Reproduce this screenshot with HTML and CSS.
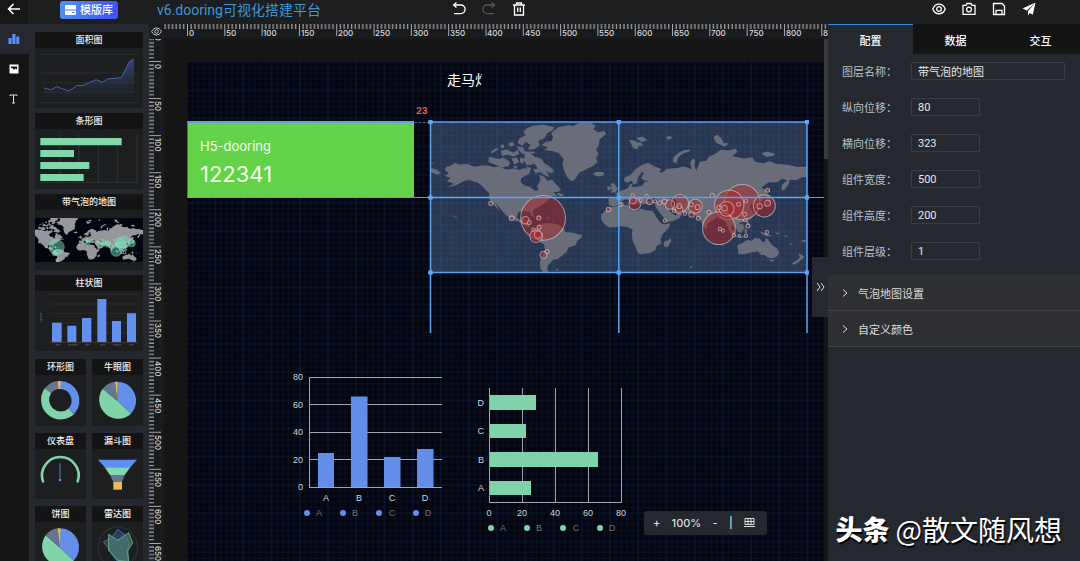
FILE: index.html
```html
<!DOCTYPE html>
<html lang="zh-CN">
<head>
<meta charset="utf-8">
<title>v6.dooring可视化搭建平台</title>
<link rel="stylesheet" href="styles.css">
</head>
<body>
<svg class="defs" aria-hidden="true">
  <symbol id="world" viewBox="61 96 1130 452" preserveAspectRatio="none">
    <g class="land">
      <path d="M105 240L110 230 122 228 135 219 150 223 172 222 195 230 215 226 235 226 250 231 268 230 290 238 312 235 330 240 342 234 362 240 358 252 345 258 334 265 333 276 345 287 360 290 376 302 386 300 382 287 392 270 388 254 404 260 413 272 426 268 440 284 454 298 446 305 430 306 444 316 425 320 412 332 400 342 388 350 372 358 370 368 375 382 366 378 360 366 342 362 326 366 321 380 330 390 342 382 347 384 346 396 358 400 360 412 375 418 362 414 345 404 325 394 306 388 290 376 277 362 262 344 255 337 272 364 262 354 243 336 238 322 238 308 228 300 218 288 205 278 190 274 178 269 160 274 142 284 112 293 132 281 112 273 122 264 105 257 118 250Z"/>
      <path d="M62 234L82 239 94 249 84 254 62 246ZM65 216L72 219 67 221ZM126 376L134 377 132 380ZM136 378L143 381 137 383Z"/>
      <path d="M372 418L388 403 402 399 422 398 445 403 462 414 466 425 484 427 517 434 515 442 502 452 498 465 476 472 470 486 456 496 444 506 430 508 422 518 414 526 412 538 417 547 402 548 392 535 390 518 396 498 406 478 402 462 390 455 374 442 365 432Z"/>
      <path d="M395 165L408 155 425 153 430 142 424 130 445 112 475 106 490 108 508 99 542 97 558 108 550 118 565 127 582 124 588 130 570 146 567 165 559 178 566 192 558 205 564 215 550 228 528 238 508 248 495 268 486 273 472 262 462 240 458 222 462 208 448 190 428 183 402 180 415 172Z"/>
      <path d="M323 158L330 144 348 136 340 126 352 114 370 107 402 104 433 111 430 120 412 130 405 144 385 152 390 166 372 178 354 178 362 165 348 155 338 168Z"/>
      <path d="M345 192L358 188 375 200 394 205 405 220 424 232 433 244 422 250 410 243 420 262 402 253 390 246 377 250 370 238 385 236 374 222 352 226 343 212ZM238 199L258 205 270 207 280 202 300 214 298 228 275 233 262 226 236 216ZM244 184L262 172 264 180 246 190ZM272 182L292 178 310 188 324 178 328 192 312 200 294 194 278 198ZM295 160L308 155 315 165 302 170ZM320 168L340 172 345 184 374 184 376 190 340 192 328 182ZM305 205L322 202 328 216 314 224ZM332 202L344 206 340 222 330 216ZM272 165L282 163 284 172 274 174ZM308 229L324 227 320 236ZM352 230L364 234 360 244 348 242ZM550 251L558 245 580 246 584 253 570 259 556 257ZM442 308L462 312 458 318 446 316Z"/>
      <path d="M378 380L392 379 402 384 388 384ZM406 381L424 382 410 386ZM434 540L446 535 444 541Z"/>
    </g>
    <g transform="translate(570 0)">
      <g class="land">
        <path d="M27 344L26 326 34 322 52 325 51 314 44 311 60 303 72 299 86 293 90 282 98 280 95 291 113 290 128 286 134 276 146 272 132 271 124 264 132 248 126 246 114 262 112 278 102 284 95 272 82 278 73 273 74 262 92 255 106 238 128 223 145 219 165 229 185 237 178 246 186 248 202 236 232 234 252 229 266 234 276 239 270 218 278 206 286 210 284 228 289 242 300 214 320 212 326 200 345 192 362 179 388 181 406 175 413 185 398 198 430 205 458 202 464 214 490 220 508 213 530 222 564 224 590 230 621 230 621 260 604 262 590 270 570 268 566 282 552 302 544 298 546 284 562 270 546 266 530 277 506 276 484 292 502 302 498 318 484 334 470 335 478 352 466 354 462 342 450 342 453 356 462 370 452 386 436 394 418 398 424 410 416 422 404 412 398 404 393 416 404 436 392 428 383 412 377 395 368 390 352 380 336 392 324 400 319 417 309 410 302 390 288 376 266 370 247 366 235 358 246 374 238 384 218 393 200 396 190 380 175 362 166 348 168 338 148 340 130 342 122 338 120 346 110 334 102 326 108 338 104 346 92 332 78 327 64 334 58 344 40 349Z"/>
        <path d="M26 352L48 348 78 344 90 348 92 358 112 362 124 356 142 361 160 362 168 378 182 398 194 402 212 398 206 414 188 432 182 446 185 460 170 468 166 480 148 489 124 492 114 488 106 468 98 450 96 432 98 418 84 411 60 407 46 412 26 411 12 400 4 388 4 374 14 364Z"/>
        <path d="M193 454L204 450 212 444 214 452 206 468 196 472 191 464ZM412 464L428 458 442 449 456 452 464 443 480 445 484 452 494 456 498 442 508 453 516 464 530 474 538 486 532 498 520 503 504 502 494 494 484 494 474 484 452 487 434 492 416 492ZM508 507L523 508 516 515ZM594 488L602 492 614 499 604 508 596 516 580 523 576 519 594 508 600 500Z"/>
        <path d="M26 294L36 290 32 282 40 278 49 288 54 296 48 306 32 308 38 298ZM22 288L31 289 31 298 24 302ZM0 126L15 124 18 132 8 142 0 148ZM0 246L12 248 10 256 0 259ZM88 150L106 152 114 158 122 156 130 166 116 168 112 178 100 174ZM108 144L128 140 142 150 126 156ZM198 140L212 138 217 144 204 150ZM218 214L222 200 236 188 254 180 272 179 268 184 246 192 234 204 230 220ZM340 142L352 134 364 144 370 158 386 160 374 170 362 164 348 158ZM484 190L500 184 526 191 520 198 498 200Z"/>
        <path d="M494 308L504 312 513 326 512 344 498 350 490 345 502 336ZM502 296L512 300 504 306ZM386 410L400 420 408 436 398 432ZM410 408L428 400 434 412 424 428 412 424ZM404 436L430 438 444 442 420 442ZM434 414L442 418 440 432 434 426ZM438 386L446 394 450 412 440 400ZM478 424L496 428 518 438 498 438ZM524 426L540 428 534 433ZM550 434L566 438 558 440ZM568 458L580 464 572 464ZM600 452L618 448 616 456ZM270 528L279 530 272 534ZM618 216L621 214 621 225Z"/>
      </g>
      <path class="sea" d="M138 331L150 320 164 324 180 332 168 336 150 334ZM208 326L218 318 228 330 230 346 222 348ZM158 362L166 364 184 388 194 400 188 402 174 384ZM206 357L216 358 232 372 228 376 214 368Z"/>
      <g class="bubbles">
        <circle cx="427" cy="336" r="53"/><circle cx="388" cy="344" r="44"/><circle cx="357" cy="414" r="49"/><circle cx="493" cy="347" r="33"/><circle cx="380" cy="356" r="22"/><circle cx="240" cy="339" r="26"/><circle cx="286" cy="348" r="21"/><circle cx="105" cy="341" r="18"/><circle cx="210" cy="343" r="14"/><circle cx="238" cy="359" r="11"/><circle cx="99" cy="331" r="10"/><circle cx="149" cy="334" r="9"/><circle cx="503" cy="339" r="9"/><circle cx="479" cy="348" r="8"/><circle cx="275" cy="373" r="8"/><circle cx="293" cy="351" r="7"/><circle cx="26" cy="358" r="7"/>
        <circle cx="65" cy="342" r="5"/><circle cx="122" cy="330" r="5"/><circle cx="98" cy="316" r="5"/><circle cx="140" cy="318" r="5"/><circle cx="166" cy="334" r="5"/><circle cx="179" cy="338" r="6"/><circle cx="194" cy="334" r="7"/><circle cx="222" cy="362" r="5"/><circle cx="238" cy="348" r="7"/><circle cx="255" cy="370" r="5"/><circle cx="274" cy="343" r="6"/><circle cx="295" cy="384" r="6"/><circle cx="195" cy="391" r="5"/><circle cx="327" cy="366" r="6"/><circle cx="337" cy="316" r="6"/><circle cx="357" cy="352" r="6"/><circle cx="374" cy="354" r="8"/><circle cx="416" cy="342" r="6"/><circle cx="438" cy="333" r="5"/><circle cx="434" cy="372" r="6"/><circle cx="436" cy="389" r="5"/><circle cx="444" cy="407" r="6"/><circle cx="360" cy="416" r="5"/><circle cx="369" cy="421" r="5"/><circle cx="402" cy="435" r="5"/><circle cx="418" cy="437" r="4"/><circle cx="438" cy="436" r="5"/><circle cx="501" cy="426" r="5"/><circle cx="503" cy="300" r="6"/>
      </g>
    </g>
    <g class="bubbles">
      <circle cx="400" cy="383" r="67"/><circle cx="379" cy="438" r="19"/><circle cx="385" cy="433" r="11"/><circle cx="347" cy="390" r="11"/><circle cx="358" cy="397" r="6"/><circle cx="387" cy="383" r="6"/><circle cx="388" cy="411" r="6"/><circle cx="371" cy="418" r="5"/><circle cx="401" cy="494" r="10"/><circle cx="412" cy="484" r="6"/><circle cx="306" cy="384" r="7"/><circle cx="243" cy="340" r="6"/><circle cx="631" cy="344" r="5"/>
    </g>
  </symbol>
</svg>

<div class="app">
  <header class="topbar">
    <button class="back" aria-label="返回"><svg width="14" height="12" viewBox="0 0 14 12"><path d="M6.5 1L1.5 6l5 5M1.5 6H13" class="line-icon thick"/></svg></button>
    <div class="top-left">
      <button class="template"><svg width="11" height="10" viewBox="0 0 11 10"><path d="M1 0h9a1 1 0 0 1 1 1v3.6H0V1a1 1 0 0 1 1-1zM0 5.6h11V9a1 1 0 0 1-1 1H1a1 1 0 0 1-1-1z" fill="#fff"/><path d="M7 7.5h2.5" stroke="#538bf5"/></svg>模版库</button>
      <h1 class="title">v6.dooring可视化搭建平台</h1>
    </div>
    <div class="history">
      <button aria-label="撤销"><svg width="14" height="14" viewBox="0 0 14 14"><path d="M4.500.5L1.500 3l3 2.500M2 3h6.800a4.300 4.300 0 0 1 0 8.600H2" class="line-icon"/></svg></button>
      <button aria-label="重做" disabled><svg width="14" height="14" viewBox="0 0 14 14"><path d="M9.500.5l3 2.500-3 2.500M12 3H5.200a4.300 4.300 0 0 0 0 8.600H12" class="line-icon"/></svg></button>
      <button aria-label="删除"><svg width="14" height="14" viewBox="0 0 14 14"><path d="M1 3h12M4.500 3V1h5v2M2.500 3v10h9V3M5.700 5.500v4.500M8.300 5.500v4.500" class="line-icon"/></svg></button>
    </div>
    <div class="actions">
      <button aria-label="预览"><svg width="14" height="14" viewBox="0 0 14 14"><path d="M.8 7C3.300.6 10.700.6 13.200 7 10.700 13.400 3.300 13.400.8 7z" class="line-icon"/><circle cx="7" cy="7" r="2.300" class="line-icon"/></svg></button>
      <button aria-label="截图"><svg width="14" height="14" viewBox="0 0 14 14"><path d="M1 3.300h3L5 1.500h4l1 1.800h3v9H1z" class="line-icon"/><circle cx="7" cy="7.500" r="2.400" class="line-icon"/></svg></button>
      <button aria-label="保存"><svg width="14" height="14" viewBox="0 0 14 14"><path d="M1.500 1.500h8.500l2.500 2.500v8.500h-11zM4 12.500V8.300h6v4.200" class="line-icon"/></svg></button>
      <button aria-label="发布"><svg width="14" height="14" viewBox="0 0 14 14"><path d="M13.500.5L.5 6.500l4.300 2zM13.500.5L6 9v4.500L7.800 11l3 1.800z" fill="#fff"/></svg></button>
    </div>
  </header>

  <main class="body">
    <nav class="nav">
      <button class="nav-item active" aria-label="图表"><svg width="12" height="12" viewBox="0 0 12 12"><path d="M.5 5h3v6h-3zM4.300 1h3.200v10H4.300zM8.300 3.500h3V11h-3z" fill="#5594f7"/></svg></button>
      <button class="nav-item" aria-label="图片"><svg width="10" height="10" viewBox="0 0 10 10"><path d="M.5.5h9v9h-9z" fill="#fff"/><path d="M2 2.500h6v3L6.500 4.500 5 6 4 4.500 2 4z" fill="#151515"/></svg></button>
      <button class="nav-item" aria-label="文本"><svg width="9" height="10" viewBox="0 0 9 10"><path d="M1 2V1h7v1M4.500 1v8M3 9h3" fill="none" stroke="#ddd"/></svg></button>
    </nav>

    <aside class="library">
      <section class="card"><h2>面积图</h2>
        <svg viewBox="105 143 324 180"><path d="M121 162H412M121 218H412M121 247H412M121 276H412M121 307H412" stroke="#2b2d30" stroke-width="3" fill="none"/><linearGradient id="fade" x2="0" y2="1"><stop stop-color="#3b5285" stop-opacity=".8"/><stop offset="1" stop-color="#26324d" stop-opacity="0"/></linearGradient><path d="M132 263L154 268 170 259 188 266 208 272 230 256 250 255 288 238 308 246 322 236 364 232 388 184 402 176V306H132Z" fill="url(#fade)"/><path d="M132 263L154 268 170 259 188 266 208 272 230 256 250 255 288 238 308 246 322 236 364 232 388 184 402 176" fill="none" stroke="#4563a6" stroke-width="3"/></svg>
      </section>
      <section class="card"><h2>条形图</h2>
        <svg viewBox="105 388 324 180"><path d="M179 404V548M237 404V548M295 404V548M352 404V548M411 404V548M121 548H412" stroke="#303235" stroke-width="3"/><path d="M121 415H365V437H121ZM121 451H222V472H121ZM121 487H268V508H121ZM121 523H251V544H121Z" fill="#81d8ab"/></svg>
      </section>
      <section class="card"><h2>带气泡的地图</h2>
        <div class="thumb-map"><svg class="world world-green" viewBox="208 124 956 389" preserveAspectRatio="none"><use href="#world" x="61" y="96" width="1130" height="452"/></svg></div>
      </section>
      <section class="card"><h2>柱状图</h2>
        <svg viewBox="105 304 324 180"><path d="M150 314H414M150 343H414M150 371H414M150 400H414M150 429H414" stroke="#2a2c2f" stroke-width="3"/><path d="M156 399H185V457H156ZM202 408H229V457H202ZM246 385H274V457H246ZM292 328H319V457H292ZM336 394H363V457H336ZM381 371H408V457H381Z" fill="#6390ee"/><path d="M150 458H414" stroke="#505155" stroke-width="2"/><path d="M167 465H180M205 465H233M256 465H270M301 465H314M340 465H362M388 465H402M123 369V396" stroke="#56585c" stroke-width="5" stroke-dasharray="3 2"/></svg>
      </section>
      <div class="pairs">
        <section class="card"><h2>环形图</h2>
          <svg viewBox="105 72 153 152"><g fill="none" stroke-width="24"><path d="M180 102A47 47 0 0 1 214 181" stroke="#638fe9"/><path d="M214 181A47 47 0 0 1 144 119" stroke="#81d4aa"/><path d="M144 119A47 47 0 0 1 174 102" stroke="#667594"/><path d="M174 102A47 47 0 0 1 181 102" stroke="#ebba48"/></g></svg>
        </section>
        <section class="card"><h2>牛眼图</h2>
          <svg viewBox="276 72 153 152"><path d="M352 149V92A57 57 0 0 1 393 188Z" fill="#638fe9"/><path d="M352 149L393 188A57 57 0 0 1 308 113Z" fill="#81d4aa"/><path d="M352 149L308 113A57 57 0 0 1 345 92Z" fill="#667594"/><path d="M352 149L345 92H353Z" fill="#ebba48"/></svg>
        </section>
        <section class="card"><h2>仪表盘</h2>
          <svg viewBox="105 291 153 152"><path d="M129 388A55 55 0 1 1 233 388" fill="none" stroke="#7ed4a9" stroke-width="8" stroke-linecap="round"/><path d="M180 334V380" stroke="#44557f" stroke-width="5"/><circle cx="180" cy="384" r="4" fill="#6390ee"/></svg>
        </section>
        <section class="card"><h2>漏斗图</h2>
          <svg viewBox="276 291 153 152"><path d="M294 323H411L391 346H314Z" fill="#5f8ff2"/><path d="M314 346H391L374 369H330Z" fill="#83d9ae"/><path d="M330 369H374L366 390H340Z" fill="#667594"/><path d="M340 390H366V413H340Z" fill="#edbd49"/></svg>
        </section>
        <section class="card"><h2>饼图</h2>
          <svg viewBox="105 513 153 152"><path d="M180 590V532A57 57 0 0 1 221 629Z" fill="#638fe9"/><path d="M180 590L221 629A57 57 0 0 1 137 553Z" fill="#81d4aa"/><path d="M180 590L137 553A57 57 0 0 1 173 532Z" fill="#667594"/><path d="M180 590L173 532H181Z" fill="#ebba48"/></svg>
        </section>
        <section class="card"><h2>雷达图</h2>
          <svg viewBox="276 513 153 152"><path d="M353 526L386 537 407 562 413 590 407 618 386 642 353 652 320 642 300 618 294 590 300 562 320 537Z" fill="none" stroke="#3a3c40" stroke-width="2"/><path d="M353 535L376 552 388 577 382 600 385 635 353 632 332 605 324 590 310 573 334 560Z" fill="#38508b" fill-opacity=".6" stroke="#4867ab" stroke-width="3"/><path d="M326 550L353 568 386 545 398 576 383 600 386 632 353 628 326 598Z" fill="#528875" fill-opacity=".6" stroke="#63a885" stroke-width="3"/></svg>
        </section>
      </div>
    </aside>

    <section class="workspace">
      <button class="ruler-corner" aria-label="显示参考线"><svg width="11" height="9" viewBox="0 0 11 9"><path d="M.7 4.500C2.700-.2 8.300-.2 10.300 4.500 8.300 9.200 2.700 9.200.7 4.500z" fill="none" stroke="#ccc"/><circle cx="5.500" cy="4.500" r="1.800" fill="none" stroke="#ccc"/></svg></button>
      <svg class="ruler ruler-x">
        <pattern id="ticks-x" width="50" height="15" patternUnits="userSpaceOnUse" patternTransform="translate(23) scale(.7462 1)"><path d="M.6 0V12" stroke="#aaa" stroke-width="1.500"/><path d="M5.600 0V5M10.600 0V5M15.600 0V5M20.600 0V5M25.600 0V5M30.600 0V5M35.600 0V5M40.600 0V5M45.600 0V5" stroke="#999" stroke-width="1.800"/></pattern>
        <rect width="100%" height="15" fill="url(#ticks-x)"/>
        <g class="ruler-text"><text x="25" y="12">0</text><text x="62" y="12">50</text><text x="99" y="12">100</text><text x="137" y="12">150</text><text x="174" y="12">200</text><text x="211" y="12">250</text><text x="249" y="12">300</text><text x="286" y="12">350</text><text x="323" y="12">400</text><text x="361" y="12">450</text><text x="398" y="12">500</text><text x="435" y="12">550</text><text x="473" y="12">600</text><text x="510" y="12">650</text><text x="547" y="12">700</text><text x="585" y="12">750</text><text x="622" y="12">800</text><text x="659" y="12">850</text></g>
      </svg>
      <svg class="ruler ruler-y">
        <pattern id="ticks-y" width="15" height="50" patternUnits="userSpaceOnUse" patternTransform="translate(0 22) scale(1 .7415)"><path d="M0 .6H12" stroke="#aaa" stroke-width="1.500"/><path d="M0 5.600H5M0 10.600H5M0 15.600H5M0 20.600H5M0 25.600H5M0 30.600H5M0 35.600H5M0 40.600H5M0 45.600H5" stroke="#999" stroke-width="1.800"/></pattern>
        <rect width="15" height="100%" fill="url(#ticks-y)"/>
        <g class="ruler-text" transform="rotate(90)"><text x="-12" y="-6">-50</text><text x="25" y="-6">0</text><text x="62" y="-6">50</text><text x="99" y="-6">100</text><text x="136" y="-6">150</text><text x="173" y="-6">200</text><text x="210" y="-6">250</text><text x="247" y="-6">300</text><text x="284" y="-6">350</text><text x="322" y="-6">400</text><text x="359" y="-6">450</text><text x="396" y="-6">500</text><text x="433" y="-6">550</text><text x="470" y="-6">600</text><text x="507" y="-6">650</text></g>
      </svg>
      <div class="stage">
        <div class="canvas">
          <svg class="grid" width="100%" height="100%">
            <pattern id="grid" width="75" height="75" patternUnits="userSpaceOnUse" patternTransform="scale(.376)"><path d="M15 0V75M30 0V75M45 0V75M60 0V75M0 15H75M0 30H75M0 45H75M0 60H75" stroke="#090f1e" stroke-width="2.500"/><path d="M0 0V75M0 0H75M75 0V75M0 75H75" stroke="#0a1a37" stroke-width="3"/></pattern>
            <rect width="100%" height="100%" fill="url(#grid)"/>
          </svg>
          <div class="node marquee">走马灯</div>
          <div class="node stat"><span class="stat-name">H5-dooring</span><strong class="stat-value">122341</strong></div>
          <span class="node distance">23</span>
          <i class="node guide-gap"></i>
          <i class="node guide-mid"></i>
          <div class="node selected">
            <svg class="world world-red"><use href="#world" width="100%" height="100%"/></svg>
            <svg class="handles" viewBox="-2 -2 381 214" width="381" height="214"><path d="M0 0H377M0 75.500H377M0 150.500H377"/><path d="M.5 0V211M188.800 0V211M377 0V211"/><g><circle cx=".5" r="2.500"/><circle cx="188.800" r="2.500"/><circle cx="377" r="2.500"/><circle cx=".5" cy="75.500" r="2.500"/><circle cx="188.800" cy="75.500" r="2.500"/><circle cx="377" cy="75.500" r="2.500"/><circle cx=".5" cy="150.500" r="2.500"/><circle cx="188.800" cy="150.500" r="2.500"/><circle cx="377" cy="150.500" r="2.500"/></g></svg>
          </div>
          <svg class="node chart chart-bar" viewBox="285 365 165 160" width="165" height="160">
            <path class="axis" d="M309 377.500H442M309 404.500H442M309 432.500H442M309 459.500H442M309 487.500H442M309.500 377V488"/>
            <path class="blue" d="M318 453H334V487H318ZM351 396.500H367.500V487H351ZM384 457H400.500V487H384ZM417 449H433.500V487H417Z"/>
            <g class="end"><text x="303" y="380">80</text><text x="303" y="408">60</text><text x="303" y="435">40</text><text x="303" y="463">20</text><text x="303" y="490">0</text></g>
            <g class="mid"><text x="326" y="501">A</text><text x="359" y="501">B</text><text x="392" y="501">C</text><text x="425" y="501">D</text></g>
            <g class="blue"><circle cx="307" cy="513" r="3"/><circle cx="343" cy="513" r="3"/><circle cx="379" cy="513" r="3"/><circle cx="416" cy="513" r="3"/></g>
            <g class="mid legend"><text x="319" y="516">A</text><text x="355" y="516">B</text><text x="392" y="516">C</text><text x="428" y="516">D</text></g>
          </svg>
          <svg class="node chart chart-row" viewBox="470 380 165 160" width="165" height="160">
            <path class="axis" d="M489.500 388V502M522.500 388V502M555.500 388V502M588.500 388V502M621.500 388V502M489 502.500H622"/>
            <path class="green" d="M490 395H536V410H490ZM490 424H526V438H490ZM490 452H598V467H490ZM490 481H531V495H490Z"/>
            <g class="end"><text x="484" y="406">D</text><text x="484" y="434">C</text><text x="484" y="463">B</text><text x="484" y="491">A</text></g>
            <g class="mid"><text x="489" y="516">0</text><text x="522" y="516">20</text><text x="555" y="516">40</text><text x="588" y="516">60</text><text x="621" y="516">80</text></g>
            <g class="green"><circle cx="491" cy="528" r="3"/><circle cx="527" cy="528" r="3"/><circle cx="563" cy="528" r="3"/><circle cx="600" cy="528" r="3"/></g>
            <g class="mid legend"><text x="503" y="531">A</text><text x="539" y="531">B</text><text x="576" y="531">C</text><text x="612" y="531">D</text></g>
          </svg>
        </div>
        <div class="scrollbar"><i></i></div>
        <div class="zoombar"><button aria-label="放大">+</button><span class="percent">100%</span><button aria-label="缩小">-</button><span>|</span><button aria-label="网格"><svg width="11" height="10" viewBox="0 0 11 10"><path d="M1 .5h9v6H1zM1 3.500h9M4 .5v6M7 .5v6M0 8.500h11" fill="none" stroke="#ddd"/></svg></button></div>
        <button class="fold" aria-label="收起面板"><svg width="9" height="10" viewBox="0 0 9 10"><path d="M1 1l3 4-3 4M5 1l3 4-3 4" fill="none" stroke="#ddd"/></svg></button>
      </div>
    </section>

    <aside class="config">
      <div class="tabs"><button class="tab active">配置</button><button class="tab">数据</button><button class="tab">交互</button></div>
      <form class="form">
        <div class="field"><label for="name">图层名称：</label><input id="name" class="wide" value="带气泡的地图"></div>
        <div class="field"><label for="top">纵向位移：</label><input id="top" value="80"></div>
        <div class="field"><label for="left">横向位移：</label><input id="left" value="323"></div>
        <div class="field"><label for="width">组件宽度：</label><input id="width" value="500"></div>
        <div class="field"><label for="height">组件高度：</label><input id="height" value="200"></div>
        <div class="field"><label for="level">组件层级：</label><input id="level" value="1"></div>
      </form>
      <button class="fold-row"><svg width="6" height="8" viewBox="0 0 6 8"><path d="M1 .5L5 4 1 7.500" fill="none" stroke="#ddd"/></svg>气泡地图设置</button>
      <button class="fold-row"><svg width="6" height="8" viewBox="0 0 6 8"><path d="M1 .5L5 4 1 7.500" fill="none" stroke="#ddd"/></svg>自定义颜色</button>
    </aside>
  </main>
  <div class="watermark"><b>头条</b><span>@散文随风想</span></div>
</div>
</body>
</html>
```
FILE: styles.css
```css
* { box-sizing: border-box; }
body { margin: 0; background: #151515; color: #eee; font-family: Inter, "Noto Sans CJK SC", sans-serif; font-size: 11px; }
button { padding: 0; border: 0; background: none; color: inherit; font: inherit; cursor: pointer; }
svg { display: block; }
h1, h2 { margin: 0; font-weight: 400; }
.defs { position: absolute; width: 0; height: 0; }
.app { position: relative; display: flex; flex-direction: column; height: 100vh; overflow: hidden; }

.topbar { display: grid; grid-template-columns: 28px 1fr auto 1fr 131px; height: 24px; flex: none; background: #1d1e20; }
.back { display: grid; padding-bottom: 7px; place-items: center; background: #171718; }
.top-left { display: flex; align-items: center; padding: 0 0 5px 32px; gap: 39px; }
.template { display: flex; align-items: center; justify-content: center; gap: 4px; width: 58px; height: 18px; border-radius: 3px; background: linear-gradient(100deg, #5191f6, #4050f0); color: #fff; font-size: 11px; font-weight: 500; line-height: 18px; white-space: nowrap; }
.title { color: #4096d4; font-family: Roboto, "Noto Sans CJK SC", sans-serif; font-size: 14px; line-height: 18px; white-space: nowrap; }
.history { display: flex; gap: 16px; padding: 2px 0 8px; }
.history button:disabled { opacity: .25; }
.actions { grid-column: 4 / 6; display: flex; justify-content: flex-end; gap: 16px; padding: 2px 44px 8px 0; }
.line-icon { fill: none; stroke: #fff; stroke-width: 1.3; }
.thick { stroke-width: 1.6; }

.body { display: flex; flex: 1; min-height: 0; }
.nav { flex: none; width: 29px; background: #151515; }
.nav-item { display: grid; width: 100%; height: 30px; padding-right: 2px; place-items: center; }
.nav-item.active { background: #25282f; }

.library { display: flex; flex: none; flex-direction: column; gap: 5px; width: 120px; padding: 8px 6px 0; overflow: hidden; background: #25282f; }
.card { flex: none; background: #1d1e20; }
.card h2 { height: 16px; background: #141414; color: #f0f0f0; font-size: 9px; font-weight: 500; line-height: 16px; text-align: center; }
.card > svg { width: 100%; }
.thumb-map { height: 60px; padding: 8px 0; }
.thumb-map svg { width: 100%; height: 44px; background: #030510; }
.pairs { display: grid; grid-template-columns: 1fr 1fr; gap: 7px 6px; padding-top: 3px; }

.workspace { display: grid; grid-template: 15px 1fr / 15px 1fr; flex: 1; min-width: 0; }
.ruler-corner { display: grid; place-items: center; background: #1b1c1f; }
.ruler { width: 100%; height: 100%; overflow: hidden; background: #1a1b1f; }
.ruler-text { fill: #ddd; font-size: 8px; font-weight: 500; }
.stage { position: relative; display: flex; min-width: 0; padding: 23px 0 0 23px; overflow: hidden; background: #151515; }
.canvas { position: relative; flex: 1; overflow: hidden; background: #030510; }
.scrollbar { width: 4px; margin-top: -23px; background: #151515; }
.scrollbar i { display: block; height: 120px; background: #3a3a3b; }
.node { position: absolute; }
.marquee { left: 260px; top: 8px; width: 35px; overflow: hidden; color: #fff; font-size: 14px; line-height: 20px; white-space: nowrap; }
.stat { display: flex; flex-direction: column; left: 0; top: 59px; width: 227px; height: 77px; padding: 14px 12px; border-top: 2px solid #58a5ee; border-left: 1px solid #3a6d9a; background: #64d34a; color: #f2ffe9; }
.stat-name { font-size: 13px; line-height: 18px; }
.stat-value { font-size: 22px; font-weight: 400; line-height: 38px; }
.distance { left: 229px; top: 43px; color: #e55d5d; font-size: 9px; font-weight: 700; line-height: 12px; }
.guide-gap { left: 227px; top: 60px; width: 16px; border-top: 1px dashed #44607f; }
.guide-mid { left: 0; right: 0; top: 135px; border-top: 1px solid #58a5ee; }
.selected { left: 243px; top: 60px; width: 377px; height: 151px; background: rgba(108, 145, 196, .36); }
.world { width: 100%; height: 100%; }
.world-red { --land: #686d79; --sea: #2a3850; --bubble: rgba(170, 38, 40, .52); --ring: rgba(215, 215, 220, .6); --ring-width: 3px; }
.world-green { --land: #96979a; --sea: #030510; --bubble: rgba(110, 215, 175, .5); --ring: rgba(150, 235, 205, .6); --ring-width: 6px; }
.land { fill: var(--land); }
.sea { fill: var(--sea); }
.bubbles { fill: var(--bubble); stroke: var(--ring); stroke-width: var(--ring-width); }
.handles { position: absolute; left: -2px; top: -2px; fill: none; stroke: #58a5f5; stroke-width: 1.5; }
.handles g { fill: #58a5f5; stroke: none; }
.chart-bar { left: 98px; top: 303px; }
.chart-row { left: 283px; top: 318px; }
.chart { font-family: "Liberation Sans", sans-serif; font-size: 9px; fill: #d0d5dd; }
.axis { fill: none; stroke: #a3a5ab; }
.blue { fill: #628ee9; }
.green { fill: #7fd2a9; }
.end { text-anchor: end; }
.mid { text-anchor: middle; }
.legend { fill: #747474; }
.zoombar { position: absolute; right: 61px; bottom: 26px; display: flex; align-items: center; justify-content: space-between; width: 123px; height: 24px; padding: 0 12px 0 9px; border-radius: 3px; background: #25282f; color: #ddd; font-size: 11px; font-weight: 500; }
.fold { position: absolute; right: 0; top: 218px; display: grid; width: 16px; height: 60px; place-items: center; background: #25282f; }

.config { flex: none; width: 252px; background: #25282f; }
.tabs { display: grid; grid-template-columns: repeat(3, 85px); height: 30px; overflow: hidden; background: #141414; }
.tab { border-top: 1px solid transparent; color: #fff; font-weight: 500; }
.tab.active { border-color: #4289d8; background: #25282f; }
.form { display: flex; flex-direction: column; gap: 18px; padding: 8px 15px 15px 14px; }
.field { display: flex; align-items: center; height: 18px; }
.field label { flex: none; width: 69px; color: #b8c0ca; white-space: nowrap; }
.field input { width: 69px; height: 18px; padding: 0 6px; border: 1px solid #3b3c3f; border-radius: 1px; outline: 0; background: transparent; color: #e8e8e8; font-family: Roboto, "Noto Sans CJK SC", sans-serif; font-size: 11px; }
.field .wide { flex: 1; width: 100%; }
.fold-row { display: flex; align-items: center; gap: 10px; width: 100%; height: 36px; padding: 0 14px; border-bottom: 1px solid #414245; background: #2e2f33; color: #ddd; }
.watermark { position: absolute; right: 18px; bottom: 12px; display: flex; align-items: center; gap: 6px; color: #fff; font-family: "Noto Sans CJK SC", sans-serif; font-size: 28px; line-height: 40px; text-shadow: 1px 2px 1px #000; white-space: nowrap; }
.watermark b { font-size: 27px; font-weight: 900; }
```
